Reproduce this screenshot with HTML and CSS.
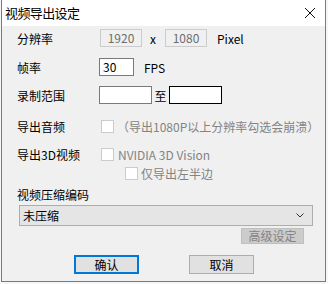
FILE: index.html
```html
<!DOCTYPE html>
<html lang="zh-CN">
<head>
  <meta charset="UTF-8" />
  <title>视频导出设定</title>
  <link rel="stylesheet" href="styles.css">
</head>
<body>
  <div class="window">
    <div class="title-bar">
      <span class="title">视频导出设定</span>
      <svg class="close" width="12" height="12" viewBox="0 0 12 12">
        <path d="M1 1 L11 11 M11 1 L1 11" stroke="#111" stroke-width="1" fill="none"/>
      </svg>
    </div>
    <div class="content">
      <div class="row row-res">
        <span class="label">分辨率</span>
        <span class="box box-disabled">1920</span>
        <span class="sep">x</span>
        <span class="box box-disabled">1080</span>
        <span class="unit">Pixel</span>
      </div>
      <div class="row row-fps">
        <span class="label">帧率</span>
        <span class="box box-fps">30</span>
        <span class="unit">FPS</span>
      </div>
      <div class="row row-range">
        <span class="label">录制范围</span>
        <span class="box box-range"></span>
        <span class="to">至</span>
        <span class="box box-range box-focus"></span>
      </div>
      <div class="row row-check row-audio">
        <span class="label">导出音频</span>
        <span class="check"></span>
        <span class="muted">（导出1080P以上分辨率勾选会崩溃）</span>
      </div>
      <div class="row row-check row-3d">
        <span class="label">导出3D视频</span>
        <span class="check"></span>
        <span class="muted nvidia">NVIDIA 3D Vision</span>
      </div>
      <div class="row row-check row-half">
        <span class="check"></span>
        <span class="muted half">仅导出左半边</span>
      </div>
      <div class="row row-codec">
        <span class="label">视频压缩编码</span>
      </div>
      <div class="select">
        <span>未压缩</span>
        <svg width="8" height="5" viewBox="0 0 8 5">
          <path d="M0.5 0.5 L4 4 L7.5 0.5" stroke="#333" stroke-width="1" fill="none"/>
        </svg>
      </div>
      <div class="adv-row">
        <button class="btn-adv">高级设定</button>
      </div>
      <div class="actions">
        <button class="btn btn-ok">确认</button>
        <button class="btn">取消</button>
      </div>
    </div>
  </div>
</body>
</html>
```

FILE: styles.css
```css
body {
  margin: 0;
  padding: 0;
  background: #f6f6f6;
  font-family: "Noto Sans CJK SC", "Liberation Sans", sans-serif;
  font-size: 12px;
  color: #000;
}

.window {
  margin-left: 1px;
  width: 323px;
  height: 281px;
  border: 1px solid #7a7a7a;
  border-top: none;
  background: #f0f0f0;
}

.title-bar {
  height: 26px;
  background: #fff;
  display: flex;
  align-items: center;
  justify-content: space-between;
  padding: 0 9px 0 3px;
}

.title {
  font-size: 13px;
  letter-spacing: -0.6px;
  line-height: 26px;
}

.close {
  display: block;
}

.content {
  padding-left: 15px;
}

.row {
  display: flex;
  align-items: center;
  height: 18px;
}

.row-check {
  height: 14px;
}

.label {
  width: 82px;
  flex: none;
}

.box {
  box-sizing: border-box;
  height: 18px;
  border: 1px solid #7a7a7a;
  background: #fff;
  line-height: 16px;
  padding: 0 3px;
}

.box-disabled {
  width: 42px;
  margin-left: 1px;
  border-color: #cccccc;
  background: #f0f0f0;
  color: #6d6d6d;
  text-align: center;
}

.sep {
  width: 22px;
  text-align: center;
}

.unit {
  margin-left: 10px;
}

.row-res {
  margin-top: 3px;
}

.row-fps {
  margin-top: 11px;
}

.box-fps {
  width: 35px;
}

.row-range {
  margin-top: 10px;
}

.box-range {
  width: 53px;
}

.box-focus {
  border-color: #000;
}

.to {
  width: 17px;
  text-align: center;
}

.check {
  box-sizing: border-box;
  width: 13px;
  height: 13px;
  border: 1px solid #cccccc;
  background: #fff;
  margin-left: 2px;
  flex: none;
}

.muted {
  color: #838383;
  margin-left: 3px;
}

.nvidia {
  margin-left: 4px;
}

.row-audio {
  margin-top: 15px;
}

.row-3d {
  margin-top: 14px;
}

.row-half {
  margin-top: 5px;
  padding-left: 106px;
}

.half {
  margin-left: 3px;
}

.row-codec {
  margin-top: 5px;
}

.select {
  box-sizing: border-box;
  margin: 2px 0 0 2px;
  width: 294px;
  height: 21px;
  border: 1px solid #adadad;
  background: #e5e5e5;
  display: flex;
  align-items: center;
  justify-content: space-between;
  padding: 0 8px 0 3px;
}

.adv-row {
  display: flex;
  justify-content: flex-end;
  width: 287px;
  margin-top: 2px;
}

button {
  font-family: inherit;
  font-size: 12px;
  margin: 0;
  padding: 0;
}

.btn-adv {
  display: block;
  width: 63px;
  height: 16px;
  background: #cccccc;
  border: 1px solid #bfbfbf;
  color: #838383;
  line-height: 14px;
}

.actions {
  display: flex;
  margin-top: 11px;
  padding-left: 57px;
  gap: 50px;
}

.btn {
  width: 65px;
  height: 19px;
  background: #e1e1e1;
  border: 1px solid #adadad;
  line-height: 17px;
}

.btn-ok {
  border: 2px solid #0078d7;
  line-height: 15px;
}
```
